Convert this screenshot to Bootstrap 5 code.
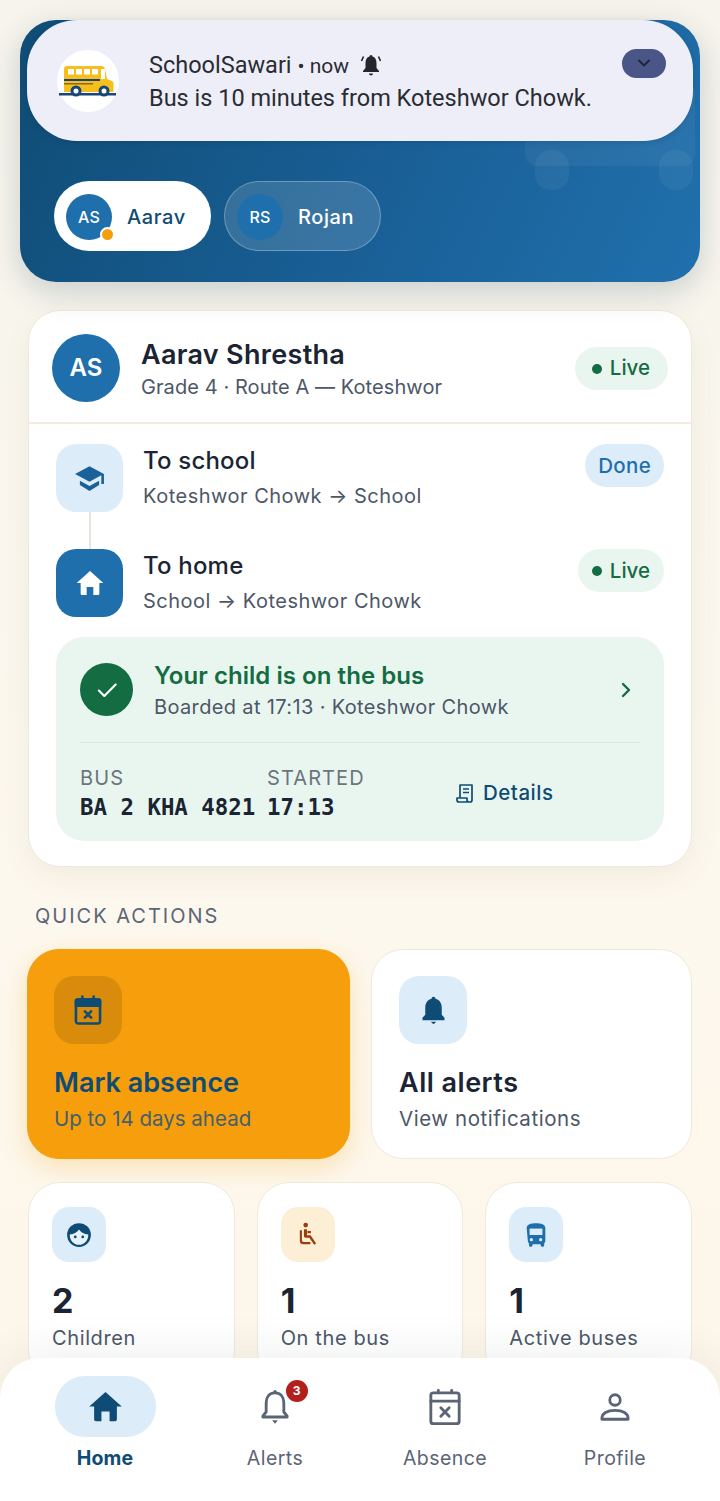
<html>
<head>
    <title>SchoolSawari</title>
    <meta charset="utf-8">
    <link href="https://cdn.jsdelivr.net/npm/bootstrap@5.3.3/dist/css/bootstrap.min.css" rel="stylesheet">
    <script src="https://cdn.jsdelivr.net/npm/bootstrap@5.3.3/dist/js/bootstrap.bundle.min.js"></script>
    <style>
        html, body { height: 1501px; overflow: hidden; }
        body {
            font-family: "Inter", "Noto Sans", sans-serif;
            background: linear-gradient(180deg, #f6f4ec 0%, #fdf8ee 60%, #fdf6e9 100%);
            color: #1b2433;
            position: relative;
        }
        .screen { padding: 20px 28px 0; }

        /* hero */
        .hero {
            margin: 0 -8px 28px;
            height: 262px;
            border-radius: 36px;
            background: linear-gradient(115deg, #0f4c75 0%, #1a6199 60%, #2070ad 100%);
            box-shadow: 0 10px 32px rgba(15, 50, 80, .2);
            padding: 161px 34px 0;
            position: relative;
            overflow: hidden;
        }
        .ghost-bus { position: absolute; right: 5px; top: 60px; width: 170px; height: 110px; fill: rgba(255,255,255,.05); }
        .chip-row { gap: 13px; }
        .kid-chip {
            width: 157px; height: 70px;
            padding: 1px 0 0 12px; gap: 15px;
            border-radius: 35px;
            font-size: 20px; font-weight: 500; letter-spacing: .6px;
        }
        .kid-chip.on { background: #fff; color: #0f4c75; }
        .kid-chip.off { background: rgba(255,255,255,.14); border: 1px solid rgba(255,255,255,.28); color: #fff; }
        .chip-av {
            width: 46px; height: 46px; border-radius: 50%;
            background: #1f6fad; color: #fff;
            font-size: 16px; font-weight: 500; letter-spacing: .2px;
            position: relative;
        }
        .chip-dot {
            position: absolute; right: -3px; bottom: -2px;
            width: 15px; height: 15px; border-radius: 50%;
            background: #f59e0b; border: 2px solid #fff;
        }

        /* notification */
        .notif {
            position: absolute; left: 27px; top: 20px;
            width: 666px; height: 121px;
            background: #eeeef8;
            border-radius: 50px;
            font-family: "Roboto", sans-serif;
            color: #2a2c33;
            box-shadow: 0 2px 6px rgba(0,0,0,.1);
        }
        .notif-logo { position: absolute; left: 30px; top: 30px; width: 62px; height: 62px; border-radius: 50%; background: #fff; }
        .notif-txt { position: absolute; left: 122px; top: 29px; font-size: 23.5px; line-height: 32px; white-space: nowrap; }
        .notif-txt .now { font-size: 21px; }
        .notif-txt svg { width: 24px; height: 24px; margin: -4px 0 0 10px; }
        .notif-exp {
            position: absolute; left: 595px; top: 29px; width: 44px; height: 29px;
            border-radius: 15px; background: #4a5588;
        }

        /* child card */
        .kid-card, .act-card, .stat-card { background: #fff; border: 1px solid #efe9dc; }
        .kid-card { border-radius: 32px; box-shadow: 0 10px 28px rgba(120, 100, 60, .08); }
        .kid-head { padding: 23px 23px 20px 23px; height: 113px; border-bottom: 2px solid #f1ecdf; gap: 21px; }
        .kid-av {
            width: 68px; height: 68px; border-radius: 50%;
            background: #1f6fad; color: #fff; font-size: 24px; font-weight: 600;
        }
        .kid-name { font-size: 27px; font-weight: 600; line-height: 34px; letter-spacing: .3px; margin-top: 3px; }
        .kid-sub { font-size: 20px; line-height: 28px; color: #4d5768; margin-top: 1px; letter-spacing: .08px; }
        .tag {
            height: 43px; padding: 1px 18px 0 17px; border-radius: 22px;
            font-size: 20.5px; font-weight: 500; white-space: nowrap;
        }
        .tag-live { background: #e9f6ef; color: #146c43; }
        .tag-live i { display: block; width: 10px; height: 10px; border-radius: 50%; background: #146c43; margin-right: 8px; }
        .tag-done { background: #dcedf9; color: #1f6fad; padding: 1px 13px 0; letter-spacing: .3px; }
        .tag-tight { padding: 1px 14px 0; }

        .kid-body { padding: 20px 27px 25px; }
        .trip { gap: 20px; height: 68px; position: relative; }
        .trip + .trip { margin-top: 37px; }
        .trip + .trip::before {
            content: ""; position: absolute; left: 33px; top: -38px;
            width: 2px; height: 38px; background: #e6e6dc;
        }
        .trip-ico { width: 67px; height: 68px; border-radius: 20px; background: #dcedf9; flex: none; }
        .trip-ico.solid { background: #1f6fad; }
        .trip-ttl { font-size: 24px; font-weight: 500; line-height: 30px; margin-top: 2px; letter-spacing: .2px; }
        .trip-sub { font-size: 20px; line-height: 28px; color: #4d5768; margin-top: 6px; letter-spacing: .5px; }

        .board { margin-top: 20px; background: #e9f6ef; border-radius: 28px; padding: 24px 24px 0; height: 204px; }
        .board-top { gap: 21px; height: 82px; padding-top: 0; border-bottom: 1px solid #dfeadf; }
        .tick { width: 53px; height: 53px; border-radius: 50%; background: #146c43; flex: none; margin-top: 2px; }
        .board-ttl { font-size: 24px; font-weight: 600; line-height: 30px; color: #146c43; letter-spacing: .05px; }
        .board-sub { font-size: 20px; line-height: 28px; color: #4d5768; margin-top: 2px; letter-spacing: .36px; }
        .chev { margin: 0 6px 24px 0; }
        .board-low { margin-top: 22px; }
        .col-bus { width: 187px; }
        .col-start { width: 189px; }
        .info-lbl { font-size: 20px; line-height: 26px; color: #6c7480; letter-spacing: 1.1px; }
        .info-val { font-family: "DejaVu Sans Mono", "Liberation Mono", monospace; font-size: 22.4px; font-weight: 700; line-height: 32px; white-space: pre; }
        .details { color: #0f4c75; font-size: 20.5px; font-weight: 500; gap: 9px; letter-spacing: .5px; margin-top: -2px; }

        .sect-ttl { margin: 36px 0 20px 7px; font-size: 20px; line-height: 26px; letter-spacing: 2px; color: #5c6678; }

        /* actions */
        .acts { gap: 21px; margin-left: -1px; }
        .act-card { flex: 1 1 0; height: 210px; border-radius: 32px; padding: 26px 27px; }
        .act-card.warm { flex: none; width: 323px; padding-left: 26px; background: #f69e0c; border-color: #f69e0c; box-shadow: 0 8px 26px rgba(245, 158, 11, .25); color: #0f4c75; }
        .act-ico { width: 68px; height: 68px; border-radius: 20px; background: #dcedf9; }
        .warm .act-ico { background: #d98c0c; }
        .act-ttl { font-size: 27px; font-weight: 600; line-height: 34px; margin-top: 22px; }
        .act-sub { font-size: 20.5px; line-height: 28px; color: #4d5768; margin-top: 5px; }
        .warm .act-sub { color: #46606a; }
        .act-wide .act-ttl { letter-spacing: .5px; }
        .act-wide .act-sub { letter-spacing: .55px; }

        /* stats */
        .stats { gap: 22px; margin-top: 23px; }
        .stat-card { flex: 1 1 0; height: 200px; border-radius: 32px; padding: 24px 23px; }
        .stat-ico { width: 54px; height: 55px; border-radius: 17px; background: #dcedf9; }
        .stat-ico.peach { background: #fdeed6; }
        .stat-num { font-size: 34px; font-weight: 700; line-height: 40px; margin-top: 19px; }
        .stat-lbl { font-size: 20px; line-height: 26px; color: #4d5768; margin-top: 4px; letter-spacing: .62px; }

        /* bottom nav */
        .tabs {
            position: absolute; left: 0; right: 0; bottom: 0; height: 143px;
            background: #fff; border-radius: 40px 40px 0 0;
            box-shadow: 0 -10px 40px rgba(40, 50, 70, .06);
            padding: 18px 20px 0;
        }
        .tab { flex: 1 1 0; color: #5a6474; font-size: 19.5px; letter-spacing: .45px; }
        .tab-pill { width: 101px; height: 61px; border-radius: 30px; position: relative; }
        .tab.on { color: #0f4c75; font-weight: 700; letter-spacing: .2px; }
        .tab.on .tab-pill { background: #dcedf9; }
        .tab-lbl { margin-top: 8px; line-height: 26px; }
        .tab-count {
            position: absolute; left: 61px; top: 4px;
            width: 22px; height: 22px; border-radius: 50%;
            background: #b3201c; color: #fff;
            font-size: 12px; font-weight: 700; letter-spacing: 0;
        }
    </style>
</head>
<body>
    <div class="screen">
        <div class="hero">
            <svg class="ghost-bus" viewBox="0 0 170 110"><rect x="0" y="0" width="170" height="86" rx="12"/><rect x="10" y="70" width="34" height="40" rx="16"/><rect x="134" y="70" width="34" height="40" rx="16"/></svg>
            <div class="chip-row d-flex">
                <div class="kid-chip on d-flex align-items-center">
                    <div class="chip-av d-flex align-items-center justify-content-center">AS<span class="chip-dot"></span></div>
                    Aarav
                </div>
                <div class="kid-chip off d-flex align-items-center">
                    <div class="chip-av d-flex align-items-center justify-content-center">RS</div>
                    Rojan
                </div>
            </div>
        </div>

        <div class="kid-card">
            <div class="kid-head d-flex align-items-center">
                <div class="kid-av d-flex align-items-center justify-content-center flex-shrink-0">AS</div>
                <div class="flex-grow-1">
                    <div class="kid-name">Aarav Shrestha</div>
                    <div class="kid-sub">Grade 4 · Route A — Koteshwor</div>
                </div>
                <div class="tag tag-live d-flex align-items-center"><i></i>Live</div>
            </div>
            <div class="kid-body">
                <div class="trip d-flex">
                    <div class="trip-ico d-flex align-items-center justify-content-center">
                        <svg width="33" height="33" viewBox="0 0 24 24" fill="#1a6199"><path d="M12 3 1.500 8.700 12 14.400l8.600-4.700V16h1.900V8.700z"/><path d="M5 13.600v3.200L12 21l7-4.200v-3.200l-7 3.900z"/></svg>
                    </div>
                    <div class="flex-grow-1">
                        <div class="trip-ttl">To school</div>
                        <div class="trip-sub">Koteshwor Chowk → School</div>
                    </div>
                    <div class="tag tag-done d-flex align-items-center">Done</div>
                </div>
                <div class="trip d-flex">
                    <div class="trip-ico solid d-flex align-items-center justify-content-center">
                        <svg width="32" height="32" viewBox="0 0 24 24" fill="#fff"><path d="M12 3 2 12h3v8a1 1 0 0 0 1 1h3.500v-6h5v6H18a1 1 0 0 0 1-1v-8h3z"/></svg>
                    </div>
                    <div class="flex-grow-1">
                        <div class="trip-ttl">To home</div>
                        <div class="trip-sub">School → Koteshwor Chowk</div>
                    </div>
                    <div class="tag tag-live tag-tight d-flex align-items-center"><i></i>Live</div>
                </div>

                <div class="board">
                    <div class="board-top d-flex align-items-start">
                        <div class="tick d-flex align-items-center justify-content-center">
                            <svg width="26" height="26" viewBox="0 0 24 24" fill="none" stroke="#fff" stroke-width="2" stroke-linecap="round" stroke-linejoin="round"><path d="m4.500 12.500 5 5L20 7"/></svg>
                        </div>
                        <div class="flex-grow-1">
                            <div class="board-ttl">Your child is on the bus</div>
                            <div class="board-sub">Boarded at 17:13 · Koteshwor Chowk</div>
                        </div>
                        <svg class="chev align-self-center" width="14" height="20" viewBox="0 0 14 20" fill="none" stroke="#146c43" stroke-width="2.400" stroke-linecap="round" stroke-linejoin="round"><path d="m3 4 6 6-6 6"/></svg>
                    </div>
                    <div class="board-low d-flex align-items-center">
                        <div class="col-bus">
                            <div class="info-lbl">BUS</div>
                            <div class="info-val">BA 2 KHA 4821</div>
                        </div>
                        <div class="col-start">
                            <div class="info-lbl">STARTED</div>
                            <div class="info-val">17:13</div>
                        </div>
                        <div class="details d-flex align-items-center">
                            <svg width="18" height="20" viewBox="0 0 18 20" fill="none" stroke="#0f4c75" stroke-width="1.700" stroke-linejoin="round"><path d="M4 15V2h12v15a2 2 0 0 1-2 2H3a2 2 0 0 1-2-2v-2h10v2a2 2 0 0 0 2 2"/><path d="M7 6h6M7 9.500h6"/></svg>
                            Details
                        </div>
                    </div>
                </div>
            </div>
        </div>

        <div class="sect-ttl">QUICK ACTIONS</div>

        <div class="acts d-flex">
            <div class="act-card warm">
                <div class="act-ico d-flex align-items-center justify-content-center">
                    <svg width="34" height="34" viewBox="0 0 24 24" fill="none" stroke="#0f4c75" stroke-width="1.800" stroke-linejoin="round" stroke-linecap="round"><rect x="3.500" y="4.500" width="17" height="17" rx="1.500"/><path d="M3.500 5h17v4h-17z" fill="#0f4c75"/><path d="M8 2.500V5M16 2.500V5"/><path d="m9.800 13 4.400 4.400M14.200 13l-4.400 4.400"/></svg>
                </div>
                <div class="act-ttl">Mark absence</div>
                <div class="act-sub">Up to 14 days ahead</div>
            </div>
            <div class="act-card act-wide">
                <div class="act-ico d-flex align-items-center justify-content-center">
                    <svg width="33" height="33" viewBox="0 0 24 24" fill="#0f4c75"><path d="M12 2a1.400 1.400 0 0 0-1.400 1.500C7.500 4.200 6 6.800 6 10v5l-2 2.200V19h16v-1.800L18 15v-5c0-3.200-1.500-5.800-4.600-6.500A1.400 1.400 0 0 0 12 2z"/><path d="M10 20.200h4L12 22z"/></svg>
                </div>
                <div class="act-ttl">All alerts</div>
                <div class="act-sub">View notifications</div>
            </div>
        </div>

        <div class="stats d-flex">
            <div class="stat-card">
                <div class="stat-ico d-flex align-items-center justify-content-center">
                    <svg width="30" height="30" viewBox="0 0 24 24"><circle cx="12" cy="12" r="9.500" fill="#0f4c75"/><path d="M4.600 11.500c3.200-.2 5.800-1.500 7.400-4 1.600 2.400 4.200 3.800 7.400 4 .2 4.500-3 8.300-7.400 8.300s-7.600-3.800-7.400-8.300z" fill="#e6f2fb"/><circle cx="9" cy="13.500" r="1.100" fill="#0f4c75"/><circle cx="15" cy="13.500" r="1.100" fill="#0f4c75"/></svg>
                </div>
                <div class="stat-num">2</div>
                <div class="stat-lbl">Children</div>
            </div>
            <div class="stat-card">
                <div class="stat-ico peach d-flex align-items-center justify-content-center">
                    <svg width="28" height="28" viewBox="0 0 24 24" fill="#9a3e0c"><circle cx="10" cy="3.500" r="2"/><path d="M8.500 7h2.600v5.200h3.100l4.800 7-1.700 1.200-4.200-6H10a1.500 1.500 0 0 1-1.500-1.500z"/><path d="M11.500 8.500h3v2h-3z"/><path d="M5 8h1.800v8.500a1.500 1.500 0 0 0 1.500 1.500H14v2H8.300A3.300 3.300 0 0 1 5 16.700z"/></svg>
                </div>
                <div class="stat-num">1</div>
                <div class="stat-lbl">On the bus</div>
            </div>
            <div class="stat-card">
                <div class="stat-ico d-flex align-items-center justify-content-center">
                    <svg width="28" height="28" viewBox="0 0 24 24" fill="#1f6fad"><path d="M4 6c0-2.800 3.500-4 8-4s8 1.200 8 4v11c0 .9-.4 1.700-1 2.200V21a1 1 0 0 1-1 1h-1a1 1 0 0 1-1-1v-1H9v1a1 1 0 0 1-1 1H7a1 1 0 0 1-1-1v-1.800c-.6-.5-1-1.300-1-2.200z"/><path fill="#dcedf9" d="M6.500 6.500h11V12h-11z"/><circle cx="8" cy="16" r="1.400" fill="#dcedf9"/><circle cx="16" cy="16" r="1.400" fill="#dcedf9"/></svg>
                </div>
                <div class="stat-num">1</div>
                <div class="stat-lbl">Active buses</div>
            </div>
        </div>
    </div>

    <div class="notif">
        <div class="notif-logo d-flex align-items-center justify-content-center">
            <svg width="58" height="34" viewBox="0 0 58 34">
                <rect x="0" y="29" width="57" height="2.500" fill="#17467a"/>
                <path d="M5 5a3 3 0 0 1 3-3h34a4 4 0 0 1 4 3l2 10 5 2c1 .5 1.500 1.300 1.500 2.500V28H5z" fill="#f6bf1d"/>
                <g fill="#fff"><rect x="9" y="5" width="6" height="5.500"/><rect x="17" y="5" width="6" height="5.500"/><rect x="25" y="5" width="6" height="5.500"/><rect x="33" y="5" width="6" height="5.500"/><rect x="42" y="5" width="4" height="10"/></g>
                <rect x="5" y="15" width="36" height="2" fill="#17467a"/>
                <rect x="5" y="19" width="29" height="1.500" fill="#8a6a10"/>
                <circle cx="17" cy="27" r="5.500" fill="#17467a"/><circle cx="17" cy="27" r="2.500" fill="#fff"/>
                <circle cx="45" cy="27" r="5.500" fill="#17467a"/><circle cx="45" cy="27" r="2.500" fill="#fff"/>
            </svg>
        </div>
        <div class="notif-txt">
            <div>SchoolSawari <span class="now">• now</span><svg viewBox="0 0 24 24" fill="#24262c"><path d="M12 2a1.500 1.500 0 0 0-1.500 1.600C7.800 4.300 6.500 6.800 6.500 10v5L4 18v1h16v-1l-2.500-3v-5c0-3.200-1.300-5.700-4-6.400A1.500 1.500 0 0 0 12 2z"/><path d="M10 20.500h4a2 2 0 0 1-4 0z"/><path d="M4.500 3.500 2.500 8M19.500 3.500l2 4.500" stroke="#24262c" stroke-width="1.600" fill="none"/></svg></div>
            <div>Bus is 10 minutes from Koteshwor Chowk.</div>
        </div>
        <div class="notif-exp d-flex align-items-center justify-content-center">
            <svg width="14" height="9" viewBox="0 0 14 9" fill="none" stroke="#20243a" stroke-width="1.800" stroke-linecap="round" stroke-linejoin="round"><path d="m2 1.500 5 5 5-5"/></svg>
        </div>
    </div>

    <div class="tabs d-flex">
        <div class="tab on d-flex flex-column align-items-center">
            <div class="tab-pill d-flex align-items-center justify-content-center">
                <svg width="39" height="39" viewBox="0 0 24 24" fill="#0f4c75"><path d="M12 3 2 12h3v8a1 1 0 0 0 1 1h3.500v-6h5v6H18a1 1 0 0 0 1-1v-8h3z"/></svg>
            </div>
            <div class="tab-lbl">Home</div>
        </div>
        <div class="tab d-flex flex-column align-items-center">
            <div class="tab-pill d-flex align-items-center justify-content-center">
                <svg width="40" height="40" viewBox="0 0 24 24" fill="none" stroke="#5a6474" stroke-width="1.700" stroke-linejoin="round"><path d="M12 3.500c-3.300 0-5.300 2.500-5.300 6V15l-2 2.500V18h14.600v-.5l-2-2.500V9.500c0-3.500-2-6-5.300-6z"/><path d="M10.300 20h3.400L12 22z" fill="#5a6474" stroke="none"/><circle cx="12" cy="2.800" r="1" fill="#5a6474" stroke="none"/></svg>
                <span class="tab-count d-flex align-items-center justify-content-center">3</span>
            </div>
            <div class="tab-lbl">Alerts</div>
        </div>
        <div class="tab d-flex flex-column align-items-center">
            <div class="tab-pill d-flex align-items-center justify-content-center">
                <svg width="40" height="40" viewBox="0 0 24 24" fill="none" stroke="#5a6474" stroke-width="1.700" stroke-linejoin="round" stroke-linecap="round"><rect x="3.500" y="3.500" width="17" height="18.500" rx="1.500"/><path d="M3.500 8.500h17M8 2v1.500M16 2v1.500"/><path d="m9.500 12.500 5 5M14.500 12.500l-5 5"/></svg>
            </div>
            <div class="tab-lbl">Absence</div>
        </div>
        <div class="tab d-flex flex-column align-items-center">
            <div class="tab-pill d-flex align-items-center justify-content-center">
                <svg width="42" height="42" viewBox="0 0 24 24" fill="none" stroke="#5a6474" stroke-width="1.600" stroke-linejoin="round"><circle cx="12" cy="8" r="3"/><path d="M4.500 18.500c0-2.800 3-4.600 7.500-4.600s7.500 1.800 7.500 4.600v.5h-15z"/></svg>
            </div>
            <div class="tab-lbl">Profile</div>
        </div>
    </div>
</body>
</html>
